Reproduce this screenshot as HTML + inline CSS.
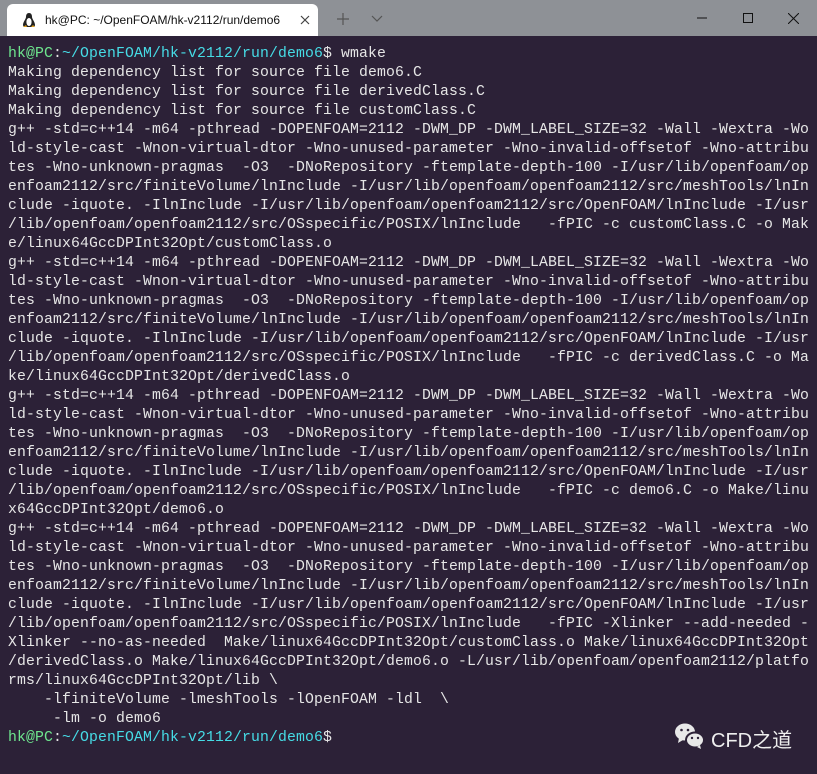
<!DOCTYPE html>
<html><head><meta charset="utf-8"><style>
*{margin:0;padding:0}
body{width:817px;height:774px;overflow:hidden;background:#2c2137;position:relative;font-family:"Liberation Sans",sans-serif}
#bar{position:absolute;left:0;top:0;width:817px;height:36px;background:#8e9196}
#tab{position:absolute;left:7px;top:4px;width:311px;height:32px;background:#fff;border-radius:6px 6px 0 0}
#tab .t{position:absolute;left:38px;top:9px;font-size:12px;color:#111}
pre{position:absolute;left:8px;top:45px;font-family:"Liberation Mono",monospace;font-size:14.8px;letter-spacing:0.12px;line-height:19px;color:#e6e6e6;white-space:pre}
.g{color:#6ee58e}.c{color:#46dce6}
</style></head><body>
<div id="bar"></div>
<div id="tab">
<svg style="position:absolute;left:14px;top:8px" width="16" height="17" viewBox="0 0 16 17"><path d="M8 1c-2 0-3 1.5-3 4 0 2-3 5-3 8 0 1 1 2 2 2h8c1 0 2-1 2-2 0-3-3-6-3-8 0-2.5-1-4-3-4z" fill="#222"/><ellipse cx="8" cy="10" rx="2.6" ry="4" fill="#fff"/><path d="M2 15h4l-1-2zM10 15h4l-2-2z" fill="#e0a020"/></svg>
<div class="t">hk@PC: ~/OpenFOAM/hk-v2112/run/demo6</div>
<svg style="position:absolute;left:293px;top:11px" width="10" height="10"><path d="M1 1L9 9M9 1L1 9" stroke="#444" stroke-width="1.2"/></svg>
</div>
<svg style="position:absolute;left:337px;top:13px" width="12" height="12"><path d="M6 0V12M0 6H12" stroke="#555" stroke-width="1.2"/></svg>
<svg style="position:absolute;left:371px;top:15px" width="12" height="8"><path d="M1 1L6 6L11 1" stroke="#555" fill="none" stroke-width="1.2"/></svg>
<svg style="position:absolute;left:697px;top:17px" width="10" height="2"><path d="M0 1H10" stroke="#111" stroke-width="1"/></svg>
<svg style="position:absolute;left:743px;top:13px" width="10" height="10"><rect x=".5" y=".5" width="9" height="9" stroke="#111" fill="none"/></svg>
<svg style="position:absolute;left:788px;top:13px" width="11" height="11"><path d="M0 0L11 11M11 0L0 11" stroke="#111" stroke-width="1"/></svg>
<pre><span class="g">hk@PC</span>:<span class="c">~/OpenFOAM/hk-v2112/run/demo6</span>$ wmake
Making dependency list for source file demo6.C
Making dependency list for source file derivedClass.C
Making dependency list for source file customClass.C
g++ -std=c++14 -m64 -pthread -DOPENFOAM=2112 -DWM_DP -DWM_LABEL_SIZE=32 -Wall -Wextra -Wo
ld-style-cast -Wnon-virtual-dtor -Wno-unused-parameter -Wno-invalid-offsetof -Wno-attribu
tes -Wno-unknown-pragmas  -O3  -DNoRepository -ftemplate-depth-100 -I/usr/lib/openfoam/op
enfoam2112/src/finiteVolume/lnInclude -I/usr/lib/openfoam/openfoam2112/src/meshTools/lnIn
clude -iquote. -IlnInclude -I/usr/lib/openfoam/openfoam2112/src/OpenFOAM/lnInclude -I/usr
/lib/openfoam/openfoam2112/src/OSspecific/POSIX/lnInclude   -fPIC -c customClass.C -o Mak
e/linux64GccDPInt32Opt/customClass.o
g++ -std=c++14 -m64 -pthread -DOPENFOAM=2112 -DWM_DP -DWM_LABEL_SIZE=32 -Wall -Wextra -Wo
ld-style-cast -Wnon-virtual-dtor -Wno-unused-parameter -Wno-invalid-offsetof -Wno-attribu
tes -Wno-unknown-pragmas  -O3  -DNoRepository -ftemplate-depth-100 -I/usr/lib/openfoam/op
enfoam2112/src/finiteVolume/lnInclude -I/usr/lib/openfoam/openfoam2112/src/meshTools/lnIn
clude -iquote. -IlnInclude -I/usr/lib/openfoam/openfoam2112/src/OpenFOAM/lnInclude -I/usr
/lib/openfoam/openfoam2112/src/OSspecific/POSIX/lnInclude   -fPIC -c derivedClass.C -o Ma
ke/linux64GccDPInt32Opt/derivedClass.o
g++ -std=c++14 -m64 -pthread -DOPENFOAM=2112 -DWM_DP -DWM_LABEL_SIZE=32 -Wall -Wextra -Wo
ld-style-cast -Wnon-virtual-dtor -Wno-unused-parameter -Wno-invalid-offsetof -Wno-attribu
tes -Wno-unknown-pragmas  -O3  -DNoRepository -ftemplate-depth-100 -I/usr/lib/openfoam/op
enfoam2112/src/finiteVolume/lnInclude -I/usr/lib/openfoam/openfoam2112/src/meshTools/lnIn
clude -iquote. -IlnInclude -I/usr/lib/openfoam/openfoam2112/src/OpenFOAM/lnInclude -I/usr
/lib/openfoam/openfoam2112/src/OSspecific/POSIX/lnInclude   -fPIC -c demo6.C -o Make/linu
x64GccDPInt32Opt/demo6.o
g++ -std=c++14 -m64 -pthread -DOPENFOAM=2112 -DWM_DP -DWM_LABEL_SIZE=32 -Wall -Wextra -Wo
ld-style-cast -Wnon-virtual-dtor -Wno-unused-parameter -Wno-invalid-offsetof -Wno-attribu
tes -Wno-unknown-pragmas  -O3  -DNoRepository -ftemplate-depth-100 -I/usr/lib/openfoam/op
enfoam2112/src/finiteVolume/lnInclude -I/usr/lib/openfoam/openfoam2112/src/meshTools/lnIn
clude -iquote. -IlnInclude -I/usr/lib/openfoam/openfoam2112/src/OpenFOAM/lnInclude -I/usr
/lib/openfoam/openfoam2112/src/OSspecific/POSIX/lnInclude   -fPIC -Xlinker --add-needed -
Xlinker --no-as-needed  Make/linux64GccDPInt32Opt/customClass.o Make/linux64GccDPInt32Opt
/derivedClass.o Make/linux64GccDPInt32Opt/demo6.o -L/usr/lib/openfoam/openfoam2112/platfo
rms/linux64GccDPInt32Opt/lib \
    -lfiniteVolume -lmeshTools -lOpenFOAM -ldl  \
     -lm -o demo6
<span class="g">hk@PC</span>:<span class="c">~/OpenFOAM/hk-v2112/run/demo6</span>$</pre>
<svg style="position:absolute;left:674px;top:722px" width="32" height="30" viewBox="0 0 32 30"><ellipse cx="11" cy="10" rx="10" ry="8.5" fill="#e8e8e8"/><path d="M5 16l-1 5 5-3z" fill="#e8e8e8"/><ellipse cx="21" cy="18" rx="9" ry="7.5" fill="#e8e8e8" stroke="#2c2137" stroke-width="2"/><path d="M26 23l1 4-4-2z" fill="#e8e8e8"/><circle cx="7.5" cy="8" r="1.3" fill="#2c2137"/><circle cx="14" cy="8" r="1.3" fill="#2c2137"/><circle cx="18" cy="16" r="1.2" fill="#2c2137"/><circle cx="24" cy="16" r="1.2" fill="#2c2137"/></svg>
<div style="position:absolute;left:711px;top:724px;font-family:'Liberation Sans','Noto Sans CJK SC',sans-serif;font-size:20px;color:#eee">CFD之道</div>
</body></html>
